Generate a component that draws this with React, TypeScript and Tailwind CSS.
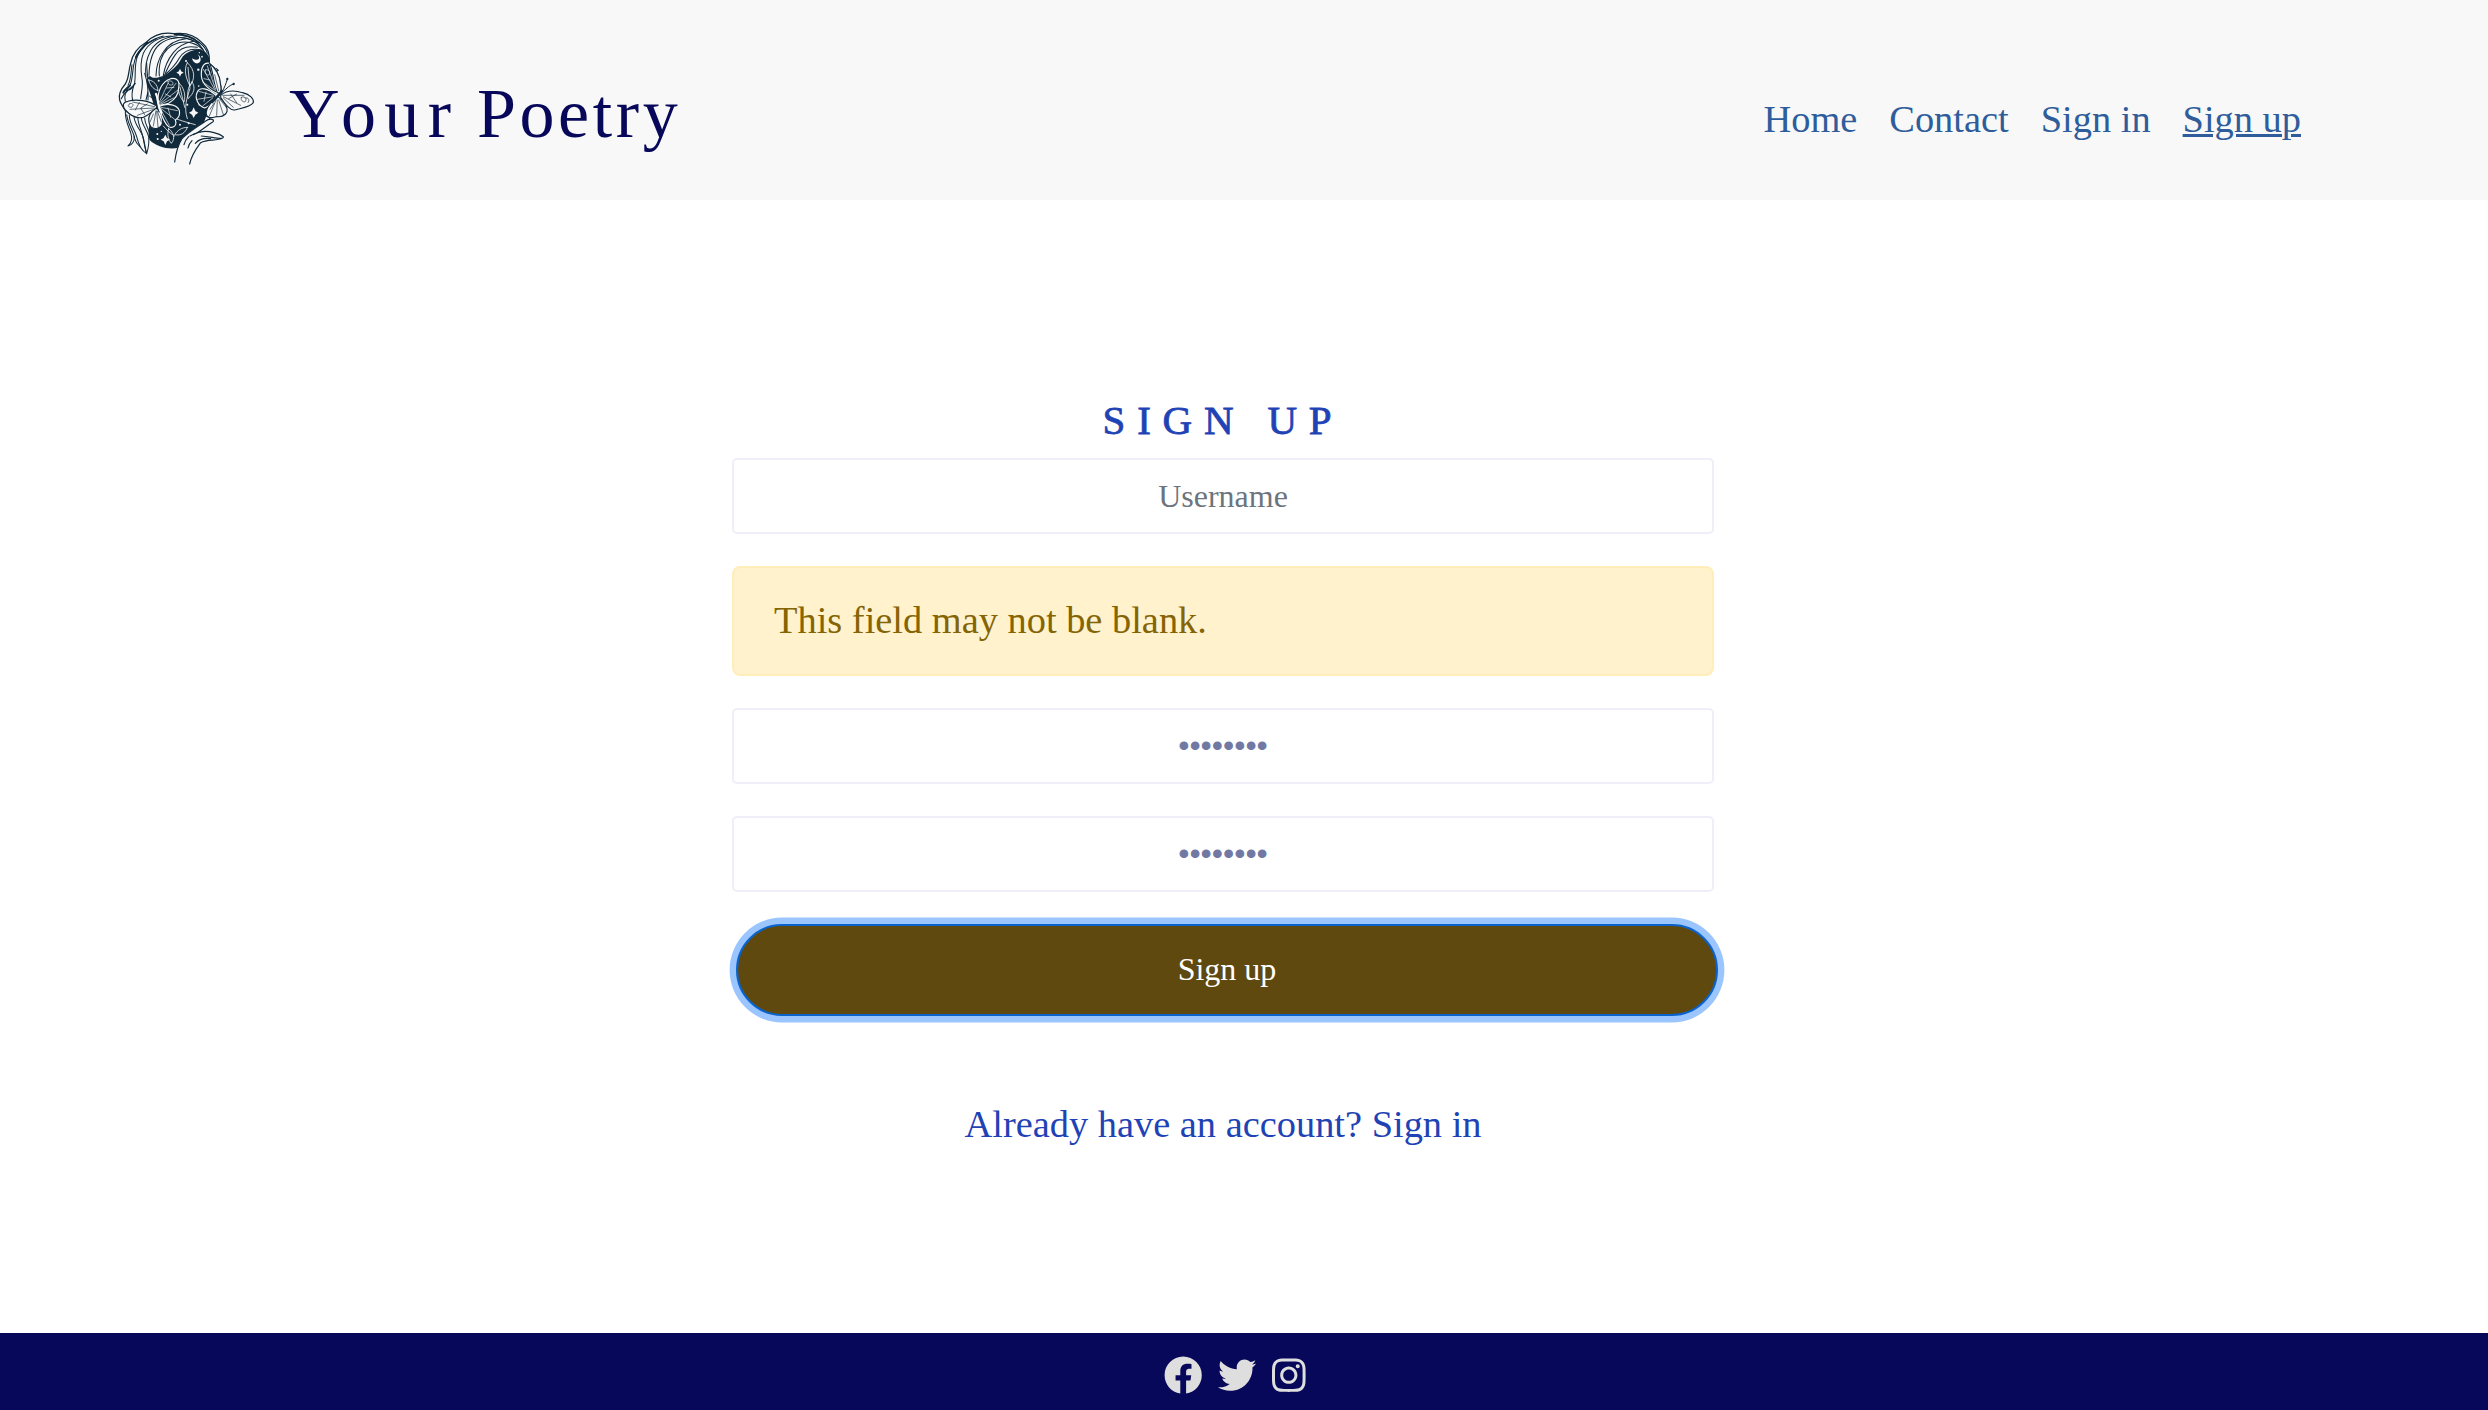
import React from "react";
import { FaFacebook, FaTwitter } from "react-icons/fa";
import { FaInstagram } from "react-icons/fa6";

const INK = "#10293b";
const PAPER = "#f8f8f8";

/** Line drawing of a long-haired figure with a starry face, two butterflies and a raised hand. */
function Logo() {
  return (
    <svg viewBox="0 0 510 465" className="h-[155px] w-[170px] shrink-0" fill="none" strokeLinecap="round" strokeLinejoin="round" aria-label="Your Poetry logo">
      {/* night-sky face */}
      <path
        fill={INK}
        d="M190 168C210 155 232 140 244 116C256 96 285 85 306 90C325 98 332 118 330 135C340 150 350 165 358 185L340 240L318 290L308 318C290 335 262 342 247 356C244 368 240 378 232 384C205 389 168 380 149 360C144 345 146 325 150 305L160 250L141 192C139 178 143 170 150 168C160 178 175 172 190 168Z"
      />
      {/* hair */}
      <g stroke={INK} strokeWidth="3.1">
        <path d="M328 128C330 100 324 82 306 68C284 44 255 37 222 41C190 36 160 46 140 66C112 82 98 100 92 130C84 158 88 172 76 192C62 208 55 224 59 240C62 254 72 262 78 276" strokeWidth="3.8" />
        <path d="M318 112C314 88 296 66 268 58C240 48 205 52 180 72C158 90 148 120 147 166" />
        <path d="M308 88C290 70 262 62 236 68C208 76 190 94 182 120C178 138 176 152 178 168" />
        <path d="M300 76C276 54 246 48 214 56M322 100C318 84 310 76 296 66" />
        <path d="M280 64C258 68 236 78 220 98C204 118 194 140 190 166" />
        <path d="M292 82C262 76 240 84 226 104C212 124 204 142 196 160" />
        <path d="M304 90C276 84 252 92 238 114C226 136 210 152 190 168" />
        <path d="M258 56C224 60 202 76 190 96C176 116 168 140 168 168" />
        <path d="M232 47C198 50 166 66 152 92C138 118 134 142 138 170" />
        <path d="M214 48C176 50 144 70 130 100C120 124 122 150 126 176C130 194 124 214 122 236" />
        <path d="M190 48C150 58 122 82 112 110C102 138 108 162 104 188C98 208 92 220 98 240" />
        <path d="M170 56C134 72 112 92 104 122C96 150 100 172 90 196C80 212 70 224 76 244" />
        <path d="M96 134C92 160 94 178 84 196M140 130C140 170 152 196 138 240M134 160C144 190 146 208 144 240" />
        <path d="M76 210C88 214 96 206 102 194M64 236C74 214 92 208 106 190" />
        <path d="M76 276C76 304 86 320 92 338C98 356 96 368 84 378C96 376 104 364 103 348" />
        <path d="M88 286C88 312 104 328 110 350C116 376 124 392 140 401C132 380 132 356 124 334C118 314 112 304 114 290" />
        <path d="M102 290C104 316 124 330 130 354C134 370 136 386 140 401M124 294C126 316 142 330 146 350C148 370 146 382 140 401" />
        <path d="M80 284C84 316 100 330 104 356C108 370 112 374 120 380M134 294C134 316 148 326 150 346" />
      </g>
      <path d="M142 66C130 84 116 92 108 112M90 196C82 204 74 208 70 218M224 43C250 44 280 52 296 68" stroke={INK} strokeWidth="6" />

      {/* leaves over the face */}
      <g stroke={PAPER} strokeWidth="2.4">
        <path d="M262 128C250 150 258 174 270 198C284 178 288 152 262 128ZM264 142L270 206C262 230 250 262 262 296" />
        <path d="M236 188C232 214 240 232 252 246C258 226 252 202 236 188ZM240 202L254 262M276 186C262 202 262 222 264 236C282 220 288 202 276 186Z" />
        <path d="M212 290C236 300 256 306 286 314M190 318C200 330 210 340 224 348M262 322C244 322 232 332 224 344C244 348 256 338 262 322ZM206 326C200 346 206 360 214 370C226 356 222 338 206 326Z" />
        <path d="M146 180C152 202 164 208 174 212C172 194 162 182 146 180Z" />
      </g>
      {/* moon and stars */}
      <g fill={PAPER}>
        <path d="M291 103C303 112 299 127 276 115C280 136 303 134 302 117C301 109 296 105 291 103Z" />
        <path d="M240 146L243.500 154L251 158L243.500 162L240 170L236.500 162L229 158L236.500 154Z" />
        <path d="M281 262L286 273L295 278L286 284L281 294L276 284L267 278L276 273Z" />
        <path d="M196 344L201 354L210 359L201 364L196 375L191 364L182 359L191 354Z" />
        <circle cx="295" cy="149" r="3.5" /><circle cx="258" cy="123" r="3" /><circle cx="306" cy="110" r="2.5" /><circle cx="298" cy="98" r="2" />
        <circle cx="172" cy="342" r="3" /><circle cx="173" cy="357" r="3" /><circle cx="296" cy="198" r="2.5" />
        <circle cx="176" cy="182" r="3" /><circle cx="262" cy="254" r="3" /><circle cx="266" cy="310" r="3" />
        <circle cx="240" cy="314" r="3" /><circle cx="298" cy="254" r="2.5" /><circle cx="184" cy="334" r="2" />
      </g>

      {/* left butterfly */}
      <g strokeWidth="3.4">
        <path fill={PAPER} stroke={INK} d="M170 258C148 242 108 236 84 244C68 246 66 258 76 270C92 288 112 296 130 292C146 284 160 274 170 262Z" />
        <path fill={PAPER} stroke={INK} d="M166 266C146 280 142 300 152 320C164 332 186 324 188 306C188 290 182 276 172 266Z" />
        <path fill={INK} stroke={PAPER} d="M174 246C172 214 186 184 212 176C232 172 240 184 236 204C236 228 222 240 206 250C196 254 184 254 176 256Z" />
        <path fill={INK} stroke={PAPER} d="M180 258C204 248 232 254 238 272C242 288 232 296 226 300C232 316 220 326 206 320C192 310 184 284 178 264Z" />
      </g>
      <path stroke={INK} strokeWidth="2" d="M164 260L98 246M162 264L90 268M160 268L112 286M142 252L122 264L134 284M118 247L106 270M88 252C98 246 104 256 94 262C84 262 82 256 88 252M168 272L160 318M170 274L174 320M172 274L184 306M160 282L150 306" />
      <path stroke={PAPER} strokeWidth="2" d="M178 246L204 190M180 248L228 190M182 250L234 210M184 252L220 234M200 204L222 202M204 184C210 180 222 184 218 194C208 198 204 192 204 184M184 262L232 272M184 266L224 298M182 268L208 316M204 264L212 292M196 222L212 230" />
      <path stroke={PAPER} strokeWidth="7" d="M168 222C176 236 170 252 184 278" />
      <path stroke={INK} strokeWidth="2.4" d="M162 226C170 238 166 254 176 276M148 228L162 238M154 216L166 232" />

      {/* right butterfly */}
      <g strokeWidth="3.4">
        <path fill={PAPER} stroke={INK} d="M360 222C352 190 342 144 328 130C344 142 358 164 360 188C364 202 364 214 362 222Z" />
        <path fill={INK} stroke={PAPER} d="M350 220C322 206 302 186 304 160C304 138 314 126 328 130C338 146 338 184 352 218Z" />
        <path fill={PAPER} stroke={INK} d="M352 218C338 184 340 150 328 130C346 142 360 168 361 190C364 202 363 214 360 220Z" />
        <path fill={INK} stroke={PAPER} d="M348 226C324 204 298 200 292 216C282 236 296 258 314 264C330 258 342 242 348 230Z" />
        <path fill={PAPER} stroke={INK} d="M346 234C326 252 312 276 322 290C338 298 346 288 352 290C372 292 386 278 380 262C376 248 364 238 354 230Z" />
        <path fill={PAPER} stroke={INK} d="M362 226C378 212 402 210 428 218C450 224 462 236 460 248C450 262 426 264 404 270C388 272 374 252 362 232Z" />
      </g>
      <path stroke={PAPER} strokeWidth="2" d="M346 212L310 148M346 206L322 138M340 208L308 186M316 150C326 146 332 156 328 164C320 168 314 160 316 150M312 176L330 180M340 226L296 214M340 230L292 238M338 234L308 258M318 216L312 244" />
      <path stroke={INK} strokeWidth="2" d="M356 212L344 164M348 240L328 288M352 240L350 286M356 240L370 284M360 238L380 264M342 250L330 268M368 226L432 226M370 230L422 256M370 234L400 262M392 222L410 248M424 232C434 226 444 238 434 246C424 244 422 238 424 232M436 234C446 232 450 240 444 248M386 236L410 222" />
      <path stroke={INK} strokeWidth="8" d="M366 214C358 222 352 230 336 246" />
      <path stroke={INK} strokeWidth="3" d="M366 216C374 202 378 190 382 178M370 214C382 204 388 196 400 192" />
      <circle cx="382" cy="177" r="3.5" fill={INK} /><circle cx="401" cy="192" r="3.5" fill={INK} />
      <path stroke={INK} strokeWidth="3.5" d="M348 145L355 151L349 154" />

      {/* hand */}
      <path fill={PAPER} d="M224 426C228 398 234 374 246 356C262 338 294 318 316 304C334 296 342 300 338 306C326 318 310 326 302 336C330 332 360 342 370 350C366 360 340 358 314 364C296 380 276 400 269 432Z" />
      <g stroke={INK} strokeWidth="3.6">
        <path d="M224 426C228 398 234 374 246 356C262 338 294 318 316 304C332 292 346 300 338 306C320 316 304 334 280 344" />
        <path d="M300 336C328 330 360 342 370 350C372 360 344 352 304 348M368 354C350 364 322 356 302 368C292 382 276 400 269 432" />
        <path d="M270 348C282 340 294 338 302 336M286 370C300 354 316 354 332 356M252 374C254 364 258 358 266 350M264 384C266 374 270 368 276 362M310 300L312 292C318 286 326 288 330 296" />
      </g>
    </svg>
  );
}

const links = ["Home", "Contact", "Sign in", "Sign up"];
const inputClass =
  "block h-[76px] w-full rounded-[5px] border-2 border-[#efeff7] bg-transparent px-6 text-center text-[32px] text-[#7078a3] outline-none placeholder:text-[#6c757d] placeholder:opacity-100";
const passwordClass = `${inputClass} [-webkit-text-stroke:1px_#7078a3]`;

export default function App() {
  return (
    <div className="flex h-[1410px] w-[2488px] flex-col overflow-hidden bg-white font-['Liberation_Serif',serif]">
      <header className="flex h-[200px] items-start justify-between bg-[#f8f8f8] pr-[187px] pl-[100px]">
        <a href="#" className="flex items-start pt-5">
          <Logo />
          <span className="mt-[54px] ml-[19px] text-[70px] leading-[80px] whitespace-nowrap text-[#08085a]">
            <span className="tracking-[8.4px]">Your</span> <span className="tracking-[3.6px]">Poetry</span>
          </span>
        </a>
        <nav className="flex gap-8 pt-[90px] text-[38.4px] leading-[58px] text-[#2f5d9b]">
          {links.map((label) => (
            <a key={label} href="#" className={label === "Sign up" ? "underline decoration-[3px] underline-offset-[2px]" : ""}>
              {label}
            </a>
          ))}
        </nav>
      </header>

      <main className="ml-[732px] flex w-[982px] grow flex-col pt-[195px]">
        <h1 className="mb-[13px] text-center text-[41px] leading-[50px] tracking-[11.8px] text-[#1f43b5] [-webkit-text-stroke:0.8px_#1f43b5]">SIGN UP</h1>
        <form className="flex flex-col gap-8">
          <input className={inputClass} type="text" placeholder="Username" />
          <div className="flex h-[110px] items-center rounded-lg border-2 border-[#ffeeba] bg-[#fff2cd] px-10 text-[38.4px] text-[#856404]">
            This field may not be blank.
          </div>
          <input className={passwordClass} type="password" defaultValue="password" />
          <input className={passwordClass} type="password" defaultValue="password" />
          <button type="button" className="ml-1 h-[92px] w-[982px] rounded-full border-2 border-[#0a62cc] bg-[#5f490e] pb-[3px] text-[32px] text-white shadow-[0_0_0_6.4px_#9ac5ff]">
            Sign up
          </button>
        </form>
        <a href="#" className="mt-[79px] text-center text-[38.4px] leading-[58px] text-[#1f43b5]">
          Already have an account? Sign in
        </a>
      </main>

      <footer className="flex h-[77px] items-center gap-4 bg-[#08085a] pt-[8px] pl-[1163.5px] text-[38.4px] text-[#dedede]">
        <FaFacebook />
        <FaTwitter />
        <FaInstagram className="w-[33.6px]" />
      </footer>
    </div>
  );
}
